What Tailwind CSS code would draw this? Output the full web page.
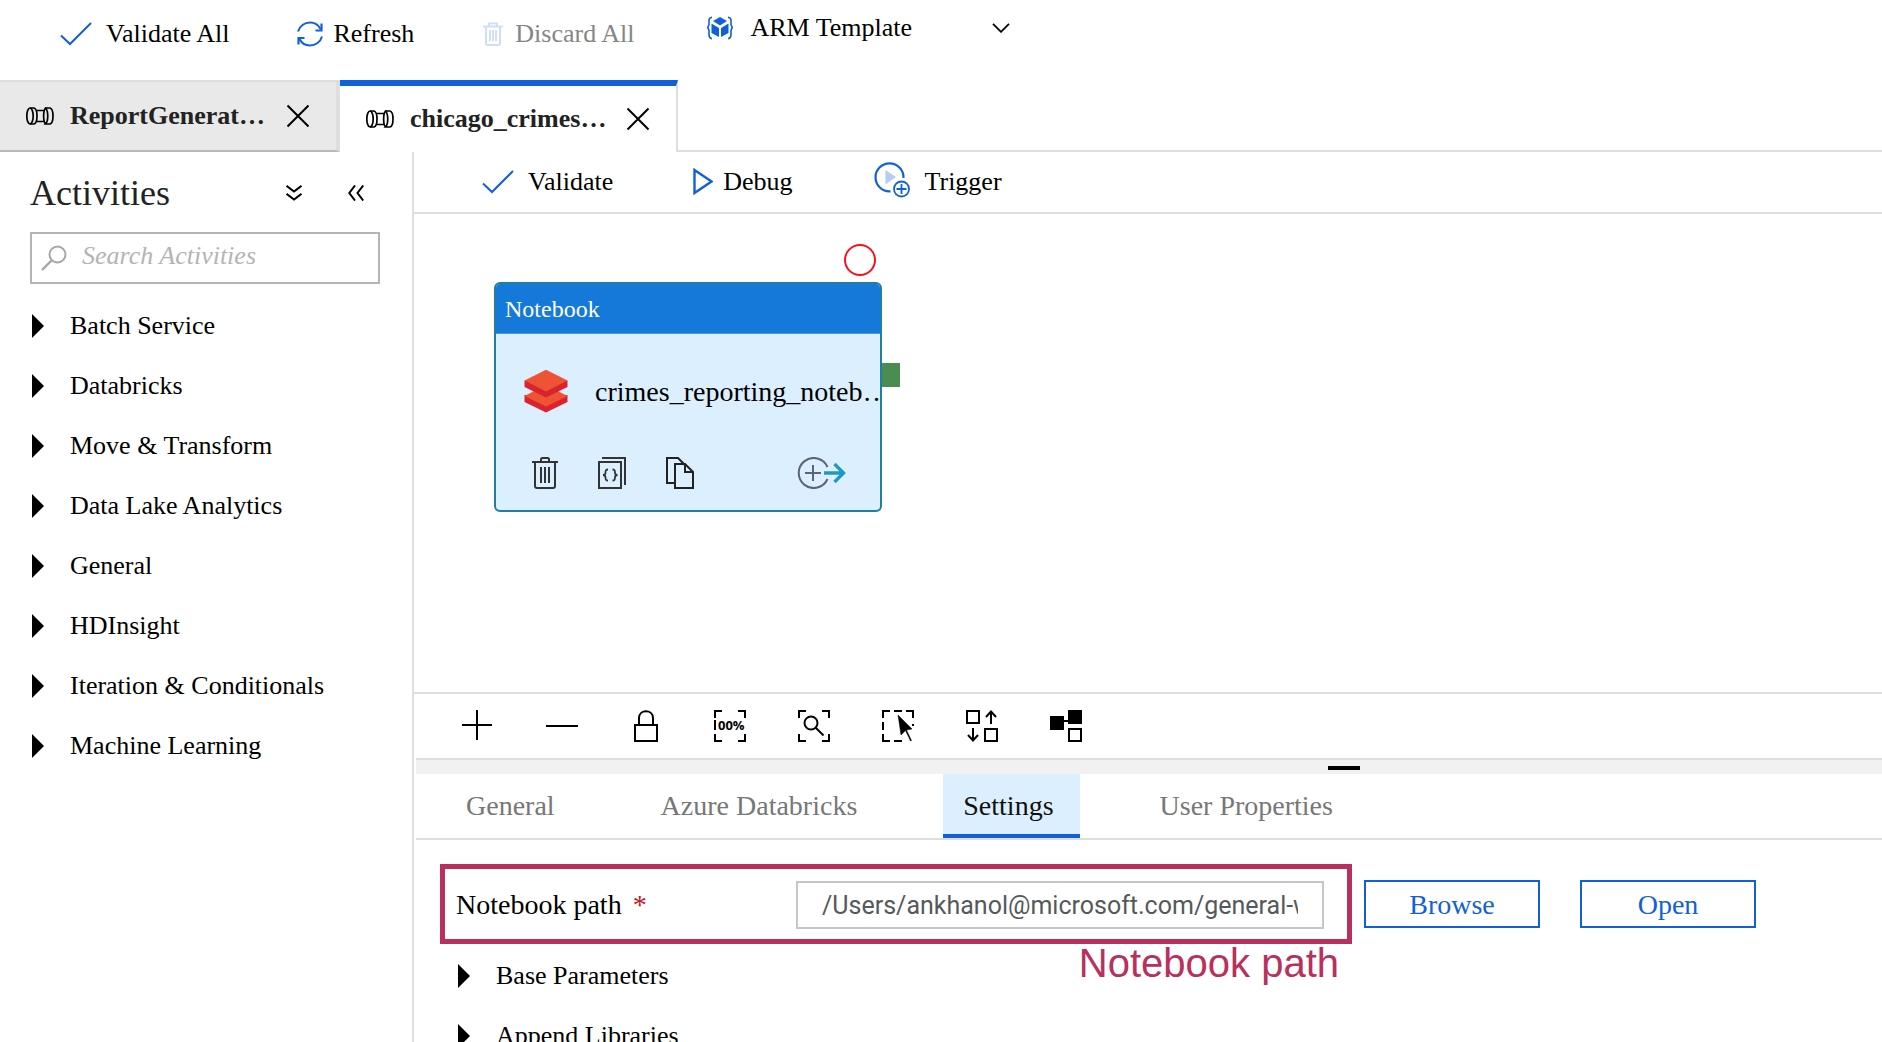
<!DOCTYPE html>
<html lang="en">
<head>
<meta charset="utf-8">
<title>Data Factory - chicago_crimes</title>
<script src="https://cdn.jsdelivr.net/npm/@tailwindcss/browser@4"></script>
</head>
<body class="flex h-screen flex-col overflow-hidden bg-white font-['Liberation_Serif',serif] text-[26px] leading-8 text-black">

<!-- Factory toolbar -->
<header class="flex h-20 shrink-0 items-start pt-[18px] pl-[60px]">
  <button class="flex items-center gap-[14px]">
    <svg class="h-6 w-8" viewBox="0 0 32 24" fill="none" stroke="#1160d9" stroke-width="2"><path d="M1 13.500L10 22L31 1"/></svg>
    Validate All
  </button>
  <button class="ml-[68px] flex items-center gap-2.5">
    <svg class="h-[26px] w-[26px]" viewBox="0 0 26 26" fill="none" stroke="#1160d9" stroke-width="2"><path d="M1 10.500C2.500 5 7.500 1.500 13 1.500C17.500 1.500 21.500 4 23.500 8"/><path d="M24.500 2.500V9.500H18.500" stroke-width="2.200"/><path d="M25 15.500C23.500 21 18.500 24.500 13 24.500C8.500 24.500 4.500 22 2.500 18"/><path d="M1.500 23.500V17H7.500" stroke-width="2.200"/></svg>
    Refresh
  </button>
  <button class="ml-[69px] flex items-center gap-3 text-[#858585]" disabled>
    <svg class="h-6 w-5" viewBox="0 0 20 24" fill="none" stroke="#cfdff7" stroke-width="2"><path d="M0 4.500H20M6 4V1.500H14V4M3 5V21.500Q3 23 4.500 23H15.500Q17 23 17 21.500V5M7 8V19M10 8V19M13 8V19"/></svg>
    Discard All
  </button>
  <button class="-mt-1.5 ml-[72px] flex items-center">
    <svg class="mr-[18px] h-6 w-[26px]" viewBox="0 0 26 24"><path d="M5 1.200C2.500 1.500 2 2.500 2 4.500V8.500L.8 11.500L2 14.500V18.500C2 21 2.500 22.300 5 22.800M21 1.200C23.500 1.500 24 2.500 24 4.500V8.500L25.200 11.500L24 14.500V18.500C24 21 23.500 22.300 21 22.800" fill="none" stroke="#1160d9" stroke-width="1.600"/><path d="M13 1L20 5L13 9.500L6 5Z M4.500 7.500L12 12V21L4.500 17Z M21.500 7.500L14 12V21L21.500 17Z" fill="#1160d9"/></svg>
    ARM Template
    <svg class="ml-20 h-2.5 w-[18px]" viewBox="0 0 18 10" fill="none" stroke="#000" stroke-width="1.800"><path d="M1 .8L9 8.800L17 .8"/></svg>
  </button>
</header>

<!-- Open pipelines -->
<nav class="flex h-[72px] shrink-0 font-bold text-[#222]" aria-label="Open pipelines">
  <div class="flex w-[340px] shrink-0 items-center border-t-2 border-r-4 border-b-2 border-t-[#dedede] border-r-[#dedede] border-b-[#b9b9b9] bg-[#e9e9e9] pl-[26px]">
    <svg class="mr-4 h-[18px] w-7 shrink-0" viewBox="0 0 28 18" fill="none" stroke="#000" stroke-width="1.700"><ellipse cx="4" cy="9" rx="3.200" ry="8"/><path d="M4 1H8C12 2 12 16 8 17H4M10.500 3.500H19M10.500 14.500H19M19.500 1H24C28 2 28 16 24 17H19.500C22.500 14 22.500 4 19.500 1C17 4 17 14 19.500 17"/></svg>
    <button class="w-[200px] text-left leading-8">ReportGenerat…</button>
    <button class="ml-4" aria-label="Close ReportGenerator"><svg class="h-6 w-6" viewBox="0 0 24 24" stroke="#000" stroke-width="2"><path d="M1.500 1.500L22.500 22.500M22.500 1.500L1.500 22.500"/></svg></button>
  </div>
  <div class="flex w-[338px] shrink-0 items-center border-t-6 border-r-2 border-t-[#1160d9] border-r-[#dedede] pl-[26px]">
    <svg class="mr-4 h-[18px] w-7 shrink-0" viewBox="0 0 28 18" fill="none" stroke="#000" stroke-width="1.700"><ellipse cx="4" cy="9" rx="3.200" ry="8"/><path d="M4 1H8C12 2 12 16 8 17H4M10.500 3.500H19M10.500 14.500H19M19.500 1H24C28 2 28 16 24 17H19.500C22.500 14 22.500 4 19.500 1C17 4 17 14 19.500 17"/></svg>
    <button class="w-[200px] text-left leading-8">chicago_crimes…</button>
    <button class="ml-4" aria-label="Close chicago_crimes"><svg class="h-6 w-6" viewBox="0 0 24 24" stroke="#000" stroke-width="2"><path d="M1.500 1.500L22.500 22.500M22.500 1.500L1.500 22.500"/></svg></button>
  </div>
  <div class="flex-1 border-b-2 border-[#dedede]"></div>
</nav>

<div class="flex min-h-0 flex-1">
  <!-- Activities -->
  <aside class="w-[414px] shrink-0 border-r-2 border-[#dedede] pl-[30px]">
    <div class="flex h-20 items-center pt-0.5 pr-12">
      <h1 class="flex-1 text-4xl text-[#222]">Activities</h1>
      <button aria-label="Expand all"><svg class="h-4 w-4" viewBox="0 0 16 16" fill="none" stroke="#000" stroke-width="2"><path d="M.5 .8L8 6.500L15.500 .8M.5 8.800L8 14.500L15.500 8.800"/></svg></button>
      <button class="ml-[46px]" aria-label="Collapse panel"><svg class="h-4 w-4" viewBox="0 0 16 16" fill="none" stroke="#000" stroke-width="2"><path d="M7 .5L1.300 8L7 15.500M15.200 .5L9.500 8L15.200 15.500"/></svg></button>
    </div>
    <label class="flex h-[52px] w-[350px] items-center border-2 border-[#b4b4b4] pl-[9px]">
      <svg class="h-[26px] w-[26px] shrink-0" viewBox="0 0 26 26" fill="none" stroke="#a6a6a6" stroke-width="2"><circle cx="16.500" cy="9.500" r="8"/><path d="M10.500 15.500L1 25" stroke-width="2.400"/></svg>
      <input type="text" aria-label="Search activities" placeholder="Search Activities" class="ml-[15px] h-full w-full min-w-0 pb-1 italic outline-none placeholder:text-[#b4b4b4]">
    </label>
    <ul class="mt-3">
      <li><button class="flex h-[60px] items-center gap-[26px] pl-0.5"><svg class="h-6 w-3" viewBox="0 0 12 24"><path d="M0 0L12 12L0 24Z"/></svg>Batch Service</button></li>
      <li><button class="flex h-[60px] items-center gap-[26px] pl-0.5"><svg class="h-6 w-3" viewBox="0 0 12 24"><path d="M0 0L12 12L0 24Z"/></svg>Databricks</button></li>
      <li><button class="flex h-[60px] items-center gap-[26px] pl-0.5"><svg class="h-6 w-3" viewBox="0 0 12 24"><path d="M0 0L12 12L0 24Z"/></svg>Move &amp; Transform</button></li>
      <li><button class="flex h-[60px] items-center gap-[26px] pl-0.5"><svg class="h-6 w-3" viewBox="0 0 12 24"><path d="M0 0L12 12L0 24Z"/></svg>Data Lake Analytics</button></li>
      <li><button class="flex h-[60px] items-center gap-[26px] pl-0.5"><svg class="h-6 w-3" viewBox="0 0 12 24"><path d="M0 0L12 12L0 24Z"/></svg>General</button></li>
      <li><button class="flex h-[60px] items-center gap-[26px] pl-0.5"><svg class="h-6 w-3" viewBox="0 0 12 24"><path d="M0 0L12 12L0 24Z"/></svg>HDInsight</button></li>
      <li><button class="flex h-[60px] items-center gap-[26px] pl-0.5"><svg class="h-6 w-3" viewBox="0 0 12 24"><path d="M0 0L12 12L0 24Z"/></svg>Iteration &amp; Conditionals</button></li>
      <li><button class="flex h-[60px] items-center gap-[26px] pl-0.5"><svg class="h-6 w-3" viewBox="0 0 12 24"><path d="M0 0L12 12L0 24Z"/></svg>Machine Learning</button></li>
    </ul>
  </aside>

  <main class="flex min-w-0 flex-1 flex-col">
    <!-- Pipeline toolbar -->
    <div class="flex h-[62px] shrink-0 items-center border-b-2 border-[#dedede] pl-[68px]">
      <button class="flex items-center gap-[14px]">
        <svg class="h-6 w-8" viewBox="0 0 32 24" fill="none" stroke="#1160d9" stroke-width="2"><path d="M1 13.500L10 22L31 1"/></svg>
        Validate
      </button>
      <button class="ml-20 flex items-center gap-2.5">
        <svg class="h-7 w-5" viewBox="0 0 20 28" fill="none" stroke="#1160d9" stroke-width="2.400"><path d="M1.500 2V25L18.500 13.500Z"/></svg>
        Debug
      </button>
      <button class="ml-[81px] flex items-center gap-[15px]">
        <svg class="mb-1 h-9 w-9" viewBox="0 0 36 36" fill="none" stroke="#1160d9" stroke-width="2.200"><path d="M16.500 29.300A14 14 0 1 1 29.500 16"/><path d="M11.500 8L22 15L11.500 22.500Z" fill="#b5cdf2" stroke="none"/><circle cx="27.500" cy="27" r="7.500" stroke-width="1.800"/><path d="M27.500 22V32M22.500 27H32.500" stroke-width="1.800"/></svg>
        Trigger
      </button>
    </div>

    <!-- Pipeline canvas -->
    <section class="relative h-[478px] shrink-0" aria-label="Pipeline canvas">
      <div class="absolute top-[30px] left-[430px] h-8 w-8 rounded-full border-2 border-[#fb0f1c]"></div>
      <div class="absolute top-[149px] left-[468px] h-6 w-[18px] bg-[#4a8d52]"></div>
      <article class="absolute top-[68px] left-20 h-[230px] w-[388px] overflow-hidden rounded-md border-2 border-[#217ea0] bg-[#dcefff]">
        <h2 class="flex h-[50px] items-center border-b border-[#4b9bea] bg-[#1479d8] pl-[9px] text-2xl text-white">Notebook</h2>
        <div class="mt-[35px] flex h-11 items-center pl-7">
          <svg class="h-11 w-11 shrink-0" viewBox="0 0 44 44"><path d="M.5 26V33L22 43.500L43.500 33V26Z" fill="#da232e"/><path d="M.5 27L22 16L43.500 27L22 37.500Z" fill="#ee5335"/><path d="M.5 11.500V18L22 28.500L43.500 18V11.500Z" fill="#da232e"/><path d="M.5 11.500L22 .8L43.500 11.500L22 22.500Z" fill="#ee5335"/></svg>
          <span class="ml-[27px] pt-0.5 text-[28px] whitespace-nowrap">crimes_reporting_noteb…</span>
        </div>
        <div class="mt-[44px] flex h-8 items-center pl-9">
          <button aria-label="Delete"><svg class="h-8 w-[26px]" viewBox="0 0 26 32" fill="none" stroke="#333" stroke-width="2"><path d="M0 5H26M9 5V2.500Q9 1 10.500 1H15.500Q17 1 17 2.500V5M3 5V29Q3 31 5 31H21Q23 31 23 29V5M9 10V26M13 10V26M17 10V26"/></svg></button>
          <button class="ml-10" aria-label="View code"><svg class="h-8 w-7" viewBox="0 0 28 32" fill="none" stroke="#333" stroke-width="2"><path d="M4 1H27V28M1 5H23V31H1Z"/><path d="M10 12.500C7.500 12.500 7.500 13.500 7.500 15.500C7.500 17.500 7 18 5 18C7 18 7.500 18.500 7.500 20.500C7.500 22.500 7.500 23.500 10 23.500M14.500 12.500C17 12.500 17 13.500 17 15.500C17 17.500 17.500 18 19.500 18C17.500 18 17 18.500 17 20.500C17 22.500 17 23.500 14.500 23.500" stroke-width="1.800"/></svg></button>
          <button class="ml-10" aria-label="Clone"><svg class="h-8 w-7" viewBox="0 0 28 32" fill="none" stroke="#222" stroke-width="2"><path d="M8 26H1V1H12L18.500 7.500M9 7H19L27 15V31H9ZM19 7V15H27"/></svg></button>
          <button class="ml-[102px]" aria-label="Add output"><svg class="h-8 w-[52px]" viewBox="0 0 52 32" fill="none"><path d="M31.500 22A15 15 0 1 1 31.500 10" stroke="#5b6478" stroke-width="2"/><path d="M9 16H25M17 8V24" stroke="#5b6478" stroke-width="2"/><path d="M28 16H47.500M38.500 7L47.500 16L38.500 25" stroke="#e8f2ef" stroke-width="6"/><path d="M28 16H47.500M38.500 7L47.500 16L38.500 25" stroke="#1a9ac9" stroke-width="3.400"/></svg></button>
        </div>
      </article>
    </section>

    <!-- Canvas tools -->
    <div class="flex h-[66px] shrink-0 items-center gap-[52px] border-t-2 border-[#dedede] pl-12">
      <button aria-label="Zoom in"><svg class="h-8 w-8" viewBox="0 0 32 32" stroke="#000" stroke-width="2"><path d="M0 15H30M15 0V30"/></svg></button>
      <button aria-label="Zoom out"><svg class="h-8 w-8" viewBox="0 0 32 32" stroke="#000" stroke-width="2"><path d="M0 16H32"/></svg></button>
      <button aria-label="Lock canvas"><svg class="h-8 w-8" viewBox="0 0 32 32" fill="none" stroke="#000" stroke-width="2"><path d="M5 15H27V31H5ZM9 15V8C9 -1 23 -1 23 8V15"/></svg></button>
      <button aria-label="Zoom to 100%"><svg class="h-8 w-8" viewBox="0 0 32 32" fill="none" stroke="#000" stroke-width="2"><path d="M1 8V1H8M24 1H31V8M31 24V31H24M8 31H1V24M1 10V20"/><text x="4" y="20" fill="#000" stroke="none" font-family="Open Sans, sans-serif" font-weight="700" font-size="13">00%</text></svg></button>
      <button aria-label="Zoom to fit"><svg class="h-8 w-8" viewBox="0 0 32 32" fill="none" stroke="#000" stroke-width="2"><path d="M1 8V1H8M24 1H31V8M31 24V31H24M8 31H1V24"/><circle cx="13" cy="13" r="6.500"/><path d="M17.500 17.500L25.500 25.500"/></svg></button>
      <button aria-label="Select"><svg class="h-8 w-8" viewBox="0 0 32 32" fill="none" stroke="#000" stroke-width="2"><path d="M1 8V1H8M12 1H20M24 1H31V8M31 14V16M8 31H1V24M1 12V20M12 31H20"/><path d="M16 5L30 19L24.500 20L29.500 30.500L28.500 31L23.500 20.500L19 25Z" fill="#000" stroke-width=".5"/></svg></button>
      <button aria-label="Auto align"><svg class="h-8 w-8" viewBox="0 0 32 32" fill="none" stroke="#000" stroke-width="2"><path d="M1 1H13V13H1ZM19 19H31V31H19ZM25 14V1.500M20 7L25 1.500L30 7M7 18V30.500M2 25L7 30.500L12 25"/></svg></button>
      <button aria-label="Show lineage"><svg class="h-8 w-8" viewBox="0 0 32 32"><path d="M0 6H14V20H0ZM18 0H32V14H18ZM13 10H19V12H13Z"/><path d="M19 19H31V31H19Z" fill="none" stroke="#000" stroke-width="2"/></svg></button>
    </div>

    <!-- Properties panel -->
    <section class="ml-0.5 min-h-0 flex-1">
      <div class="h-4 border-t-2 border-[#dedede] bg-[#f1f1f1] pt-1.5 pl-[912px]"><div class="h-1 w-8 bg-black"></div></div>
      <nav class="flex h-[66px] gap-[60px] border-b-2 border-[#dedede] pl-[30px] text-[28px] text-[#777]" aria-label="Activity properties">
        <button class="border-b-4 border-transparent pt-1 pr-[26px] pl-5">General</button>
        <button class="border-b-4 border-transparent pt-1 pr-[26px] pl-5">Azure Databricks</button>
        <button class="border-b-4 border-[#1160d9] bg-[#dcefff] pt-1 pr-[26px] pl-5 text-[#111]">Settings</button>
        <button class="border-b-4 border-transparent pt-1 pr-[26px] pl-5">User Properties</button>
      </nav>
      <div class="flex items-start pt-6 pl-6 text-[28px]">
        <div class="relative flex h-20 w-[912px] items-center justify-between border-5 border-[#b92f5e] pt-0.5 pr-[23px] pl-[11px]">
          <label for="path">Notebook path <span class="ml-1 text-[#c0141c]">*</span></label>
          <input id="path" type="text" value="/Users/ankhanol@microsoft.com/general-workspace" class="h-12 w-[528px] border-2 border-[#c6c6c6] px-6 font-[Roboto,sans-serif] text-[25px] text-[#55595c]">
          <span class="absolute top-[74px] right-2 font-['Liberation_Sans',sans-serif] text-[40px] leading-10 whitespace-nowrap text-[#b92f5e]">Notebook path</span>
        </div>
        <button class="mt-4 ml-3 h-12 w-44 border-2 border-[#1160d9] pt-0.5 text-[#1160d9]">Browse</button>
        <button class="mt-4 ml-10 h-12 w-44 border-2 border-[#1160d9] pt-0.5 text-[#1160d9]">Open</button>
      </div>
      <div class="pt-0.5 pl-[42px]">
        <button class="flex h-[60px] items-center gap-[26px]"><svg class="h-6 w-3" viewBox="0 0 12 24"><path d="M0 0L12 12L0 24Z"/></svg>Base Parameters</button>
        <button class="flex h-[60px] items-center gap-[26px]"><svg class="h-6 w-3" viewBox="0 0 12 24"><path d="M0 0L12 12L0 24Z"/></svg>Append Libraries</button>
      </div>
    </section>
  </main>
</div>
</body>
</html>
